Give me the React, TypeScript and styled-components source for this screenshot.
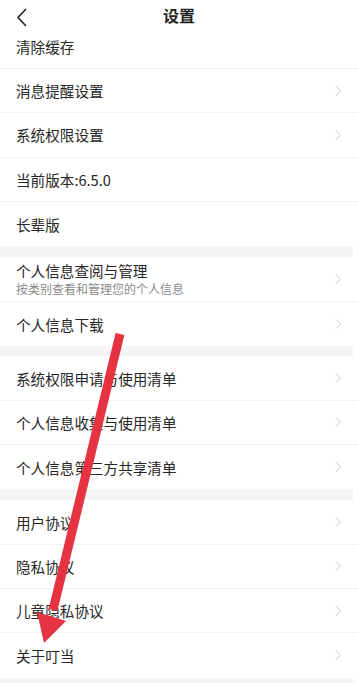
import styled, { createGlobalStyle } from 'styled-components'

const GlobalStyle = createGlobalStyle`
  html, body {
    margin: 0;
    padding: 0;
    background: #fff;
  }
  body {
    font-family: "Noto Sans CJK SC", "Noto Sans", sans-serif;
    color: #262626;
  }
`

const Page = styled.div`
  position: relative;
  width: 358px;
  height: 683px;
  overflow: hidden;
  background: #fff;
`

const Header = styled.div`
  position: relative;
  height: 33px;
  display: flex;
  align-items: center;
  justify-content: center;
`

const BackButton = styled.div`
  position: absolute;
  left: 14px;
  top: 7px;
  width: 16px;
  height: 20px;
  display: flex;
  align-items: center;
  justify-content: center;
`

const Title = styled.h1`
  margin: -3px 0 0;
  font-size: 16px;
  font-weight: 700;
  color: #222;
  line-height: 1;
`

const Group = styled.div`
  background: #fff;
`

const Gap = styled.div<{ $size?: number }>`
  height: ${p => p.$size ?? 11}px;
  background: #f5f5f5;
  margin-right: 5px;
`

const Row = styled.div<{ $clipped?: boolean; $last?: boolean; $tall?: boolean }>`
  box-sizing: border-box;
  height: ${p => (p.$clipped ? '36px' : p.$tall ? '45px' : '44.3px')};
  padding: 0 16px ${p => (p.$clipped ? 8 : 0)}px 16px;
  display: flex;
  align-items: center;
  justify-content: space-between;
  border-bottom: ${p => (p.$last ? 'none' : '1px solid #f1f1f1')};
`

const Texts = styled.div`
  display: flex;
  flex-direction: column;
`

const Label = styled.span`
  font-size: 14.6px;
  line-height: 19px;
  color: #262626;
`

const SubLabel = styled.span`
  font-size: 12px;
  line-height: 16px;
  color: #8a8a8a;
  margin-top: 1px;
`

const Chevron = () => (
  <svg width="8" height="12" viewBox="0 0 8 12">
    <path d="M1.5 1 L6.5 6 L1.5 11" fill="none" stroke="#c9c9c9" strokeWidth="1" />
  </svg>
)

const Overlay = styled.svg`
  position: absolute;
  left: 0;
  top: 0;
  pointer-events: none;
`

type Item = { label: string; sub?: string; arrow?: boolean }

const groups: Item[][] = [
  [
    { label: '清除缓存' },
    { label: '消息提醒设置', arrow: true },
    { label: '系统权限设置', arrow: true },
    { label: '当前版本:6.5.0' },
    { label: '长辈版' },
  ],
  [
    { label: '个人信息查阅与管理', sub: '按类别查看和管理您的个人信息', arrow: true },
    { label: '个人信息下载', arrow: true },
  ],
  [
    { label: '系统权限申请与使用清单', arrow: true },
    { label: '个人信息收集与使用清单', arrow: true },
    { label: '个人信息第三方共享清单', arrow: true },
  ],
  [
    { label: '用户协议', arrow: true },
    { label: '隐私协议', arrow: true },
    { label: '儿童隐私协议', arrow: true },
    { label: '关于叮当', arrow: true },
  ],
]

const gapSizes = [0, 11, 10, 11]

const App = () => (
  <Page>
    <GlobalStyle />
    <Header>
      <BackButton>
        <svg width="12" height="19" viewBox="0 0 12 19">
          <path d="M10 1 L2 9.5 L10 18" fill="none" stroke="#222" strokeWidth="1.6" />
        </svg>
      </BackButton>
      <Title>设置</Title>
    </Header>
    {groups.map((group, gi) => (
      <div key={gi}>
        {gi > 0 && <Gap $size={gapSizes[gi]} />}
        <Group>
          {group.map((item, i) => (
            <Row
              key={item.label}
              $clipped={gi === 0 && i === 0}
              $tall={!!item.sub}
              $last={i === group.length - 1}
            >
              <Texts>
                <Label>{item.label}</Label>
                {item.sub && <SubLabel>{item.sub}</SubLabel>}
              </Texts>
              {item.arrow && <Chevron />}
            </Row>
          ))}
        </Group>
      </div>
    ))}
    <Gap />
    <Overlay width="358" height="683" viewBox="0 0 358 683">
      <line x1="120" y1="334" x2="53" y2="610" stroke="#e53342" strokeWidth="9" />
      <polygon points="37,612 66,621 44,643" fill="#e53342" />
    </Overlay>
  </Page>
)

export default App
